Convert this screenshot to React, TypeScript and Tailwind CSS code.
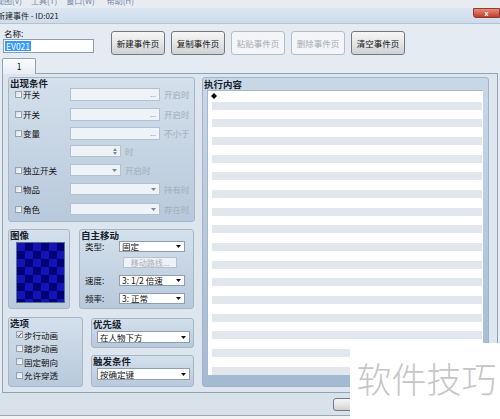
import React from 'react';

function Check({ checked }: { checked?: boolean }) {
  return (
    <span className="flex h-[7px] w-[7px] shrink-0 items-center justify-center border border-[#95a3b2] bg-linear-to-br from-[#d6dde6] to-[#fbfcfd]">
      {checked && (
        <svg width="6" height="6" viewBox="0 0 6 6">
          <path d="M0.6 3.3 L2.2 5 L5.4 0.6" stroke="#1a1a1a" strokeWidth="0.9" fill="none" />
        </svg>
      )}
    </span>
  );
}

function Arrow({ color }: { color: string }) {
  return (
    <svg width="5" height="3" viewBox="0 0 5 3" className="shrink-0">
      <path d="M0 0 L5 0 L2.5 3 Z" fill={color} />
    </svg>
  );
}

function Field({ className, kind }: { className: string; kind: 'dots' | 'arrow' | 'spin' }) {
  return (
    <div className={`flex shrink-0 items-center justify-end border border-[#b2c0cf] bg-[#eef3f8] pr-[3px] ${className}`}>
      {kind === 'dots' && <span className="text-[7px] leading-[7px] text-[#7f8b98]">...</span>}
      {kind === 'arrow' && <Arrow color="#7d8894" />}
      {kind === 'spin' && (
        <div className="flex flex-col gap-[1px]">
          <svg width="4" height="3" viewBox="0 0 4 3"><path d="M0 3 L4 3 L2 0 Z" fill="#7d8894" /></svg>
          <svg width="4" height="3" viewBox="0 0 4 3"><path d="M0 0 L4 0 L2 3 Z" fill="#7d8894" /></svg>
        </div>
      )}
    </div>
  );
}

function Combo({ text, className }: { text: string; className: string }) {
  return (
    <div className={`flex shrink-0 items-center justify-between border border-[#8d9eb1] bg-white pl-[2px] pr-[3px] text-[8.5px] text-[#111] ${className}`}>
      <span className="whitespace-pre leading-none">{text}</span>
      <Arrow color="#111" />
    </div>
  );
}

function Group({ title, className, children }: { title: string; className: string; children?: React.ReactNode }) {
  return (
    <div className={`shrink-0 rounded-[3px] border border-[#a4b6ca] bg-linear-to-b from-[#d4e0ec] to-[#b8c9db] ${className}`}>
      <div className="h-[10px] whitespace-nowrap pl-[1px] text-[9.5px] font-bold leading-[10px] text-[#17212c]">{title}</div>
      {children}
    </div>
  );
}

function CondRow({ label, check = true, field, fieldW, suffix, className }: { label?: string; check?: boolean; field: 'dots' | 'arrow' | 'spin'; fieldW: string; suffix: string; className: string }) {
  return (
    <div className={`flex items-center ${className}`}>
      <div className="flex w-[61px] shrink-0 items-center gap-[1px] pl-[6px]">
        {check && <Check />}
        {label && <span className="text-[8.5px] leading-none text-[#111]">{label}</span>}
      </div>
      <Field className={`h-full ${fieldW}`} kind={field} />
      <span className="ml-[4px] whitespace-nowrap text-[8.5px] leading-none text-[#a3acb6]">{suffix}</span>
    </div>
  );
}

function Btn({ text, disabled, className }: { text?: string; disabled?: boolean; className: string }) {
  return disabled ? (
    <div className={`flex shrink-0 items-center justify-center rounded-[3px] border border-[#b4bcc5] bg-[#f3f5f8] text-[8.5px] text-[#a4abb3] ${className}`}>{text}</div>
  ) : (
    <div className={`flex shrink-0 items-center justify-center rounded-[3px] border border-[#74797f] bg-linear-to-b from-[#f6f6f6] via-[#e6e6e6] to-[#cfd1d4] text-[8.5px] text-[#111] ${className}`}>{text}</div>
  );
}

export default function App() {
  return (
    <div className="relative flex h-[419px] w-[500px] flex-col overflow-hidden bg-[#e4ebf3] font-['Noto_Sans_CJK_SC','Noto_Sans',sans-serif]">
      {/* menu strip */}
      <div className="h-[8px] shrink-0 overflow-hidden bg-[#e8ecf1]">
        <div className="-mt-[3px] flex whitespace-nowrap text-[8px] leading-[8px] text-[#6f86a8]">
          <span className="-ml-[4px]">视图(V)</span>
          <span className="ml-[9px]">工具(T)</span>
          <span className="ml-[9px]">窗口(W)</span>
          <span className="ml-[12px]">帮助(H)</span>
        </div>
      </div>
      {/* title bar */}
      <div className="flex h-[16px] shrink-0 justify-between border-b border-[#b4c3d4] bg-linear-to-b from-[#dbe6f2] to-[#cedcec]">
        <span className="-ml-[3px] self-center whitespace-nowrap text-[8px] leading-none text-[#1c1c1c]">新建事件 - ID:021</span>
        <div className="flex h-[10px] w-[27px] items-center justify-center rounded-bl-[3px] border border-[#8f3b30] bg-linear-to-b from-[#e58c7c] to-[#c23a28] text-[7px] font-bold leading-none text-white">x</div>
      </div>
      {/* name + buttons */}
      <div className="flex h-[34px] shrink-0 pl-[3px] pt-[4px]">
        <div className="flex w-[91px] shrink-0 flex-col">
          <span className="h-[11px] pl-[1px] text-[8.5px] leading-[11px] text-[#111]">名称:</span>
          <div className="flex h-[14px] items-center border border-[#8b9cb0] bg-white pl-[1px]">
            <span className="bg-[#3399ff] px-[1px] text-[8.5px] leading-[10px] text-white">EV021</span>
          </div>
        </div>
        <div className="ml-[17px] mt-[3px] flex gap-[6px]">
          <Btn text="新建事件页" className="h-[24px] w-[54px]" />
          <Btn text="复制事件页" className="h-[24px] w-[54px]" />
          <Btn text="粘贴事件页" disabled className="h-[24px] w-[54px]" />
          <Btn text="删除事件页" disabled className="h-[24px] w-[54px]" />
          <Btn text="清空事件页" className="h-[24px] w-[54px]" />
        </div>
      </div>
      {/* tab header */}
      <div className="flex h-[15px] shrink-0 pl-[2px]">
        <div className="relative z-10 flex h-[16px] w-[34px] items-center justify-center rounded-t-[2px] border border-b-0 border-[#8fa3b8] bg-linear-to-b from-[#fbfcfe] to-[#e7edf4] text-[8.5px] leading-none text-[#111]">1</div>
      </div>
      {/* tab body */}
      <div className="mx-[2px] flex h-[320px] shrink-0 gap-[7px] border border-[#8fa3b8] bg-[#dde5ee] pl-[5px] pt-[3px]">
        {/* left column */}
        <div className="flex w-[187px] shrink-0 flex-col">
          <Group title="出现条件" className="h-[145px] w-[187px]">
            <CondRow label="开关" field="dots" fieldW="w-[90px]" suffix="开启时" className="h-[13px]" />
            <CondRow label="开关" field="dots" fieldW="w-[90px]" suffix="开启时" className="mt-[7px] h-[13px]" />
            <CondRow label="变量" field="dots" fieldW="w-[90px]" suffix="不小于" className="mt-[6px] h-[13px]" />
            <CondRow check={false} field="spin" fieldW="w-[51px]" suffix="时" className="mt-[5px] h-[12px]" />
            <CondRow label="独立开关" field="arrow" fieldW="w-[51px]" suffix="开启时" className="mt-[7px] h-[12px]" />
            <CondRow label="物品" field="arrow" fieldW="w-[90px]" suffix="持有时" className="mt-[7px] h-[12px]" />
            <CondRow label="角色" field="arrow" fieldW="w-[90px]" suffix="存在时" className="mt-[8px] h-[12px]" />
          </Group>
          <div className="mt-[7px] flex gap-[9px]">
            <Group title="图像" className="h-[80px] w-[62px]">
              <div className="ml-[7px] mt-[2px] h-[61px] w-[49px] border border-[#5a6f8a]">
                <svg width="47" height="59" viewBox="0 0 47 59" className="block">
                  <defs>
                    <pattern id="chk" width="16" height="16" patternUnits="userSpaceOnUse">
                      <rect width="16" height="16" fill="#00007a" />
                      <rect x="0" y="0" width="8" height="8" fill="#1414b4" />
                      <rect x="8" y="8" width="8" height="8" fill="#1414b4" />
                    </pattern>
                  </defs>
                  <rect width="47" height="59" fill="url(#chk)" />
                </svg>
              </div>
            </Group>
            <Group title="自主移动" className="h-[80px] w-[115px]">
              <div className="mt-[1px] flex h-[11px] items-center">
                <span className="w-[39px] shrink-0 pl-[5px] text-[8.5px] leading-none text-[#111]">类型:</span>
                <Combo text="固定" className="h-full w-[66px]" />
              </div>
              <div className="ml-[43px] mt-[5px] flex h-[11px] w-[54px] items-center justify-center border border-[#b8c2cd] bg-[#eef2f6] text-[8px] leading-none text-[#a6aeb7]">移动路线...</div>
              <div className="mt-[7px] flex h-[11px] items-center">
                <span className="w-[39px] shrink-0 pl-[5px] text-[8.5px] leading-none text-[#111]">速度:</span>
                <Combo text="3: 1/2 倍速" className="h-full w-[66px]" />
              </div>
              <div className="mt-[7px] flex h-[11px] items-center">
                <span className="w-[39px] shrink-0 pl-[5px] text-[8.5px] leading-none text-[#111]">频率:</span>
                <Combo text="3: 正常" className="h-full w-[66px]" />
              </div>
            </Group>
          </div>
          <div className="mt-[8px] flex gap-[8px]">
            <Group title="选项" className="h-[70px] w-[75px]">
              {[
                ['步行动画', true],
                ['踏步动画', false],
                ['固定朝向', false],
                ['允许穿透', false],
              ].map(([t, c]) => (
                <div key={t as string} className="flex h-[13.5px] items-center gap-[1px] pl-[7px]">
                  <Check checked={c as boolean} />
                  <span className="text-[8.5px] leading-none text-[#111]">{t as string}</span>
                </div>
              ))}
            </Group>
            <div className="flex w-[103px] shrink-0 flex-col">
              <Group title="优先级" className="mt-[1px] h-[30px] w-[103px]">
                <Combo text="在人物下方" className="ml-[5px] mt-[2px] h-[12px] w-[93px]" />
              </Group>
              <Group title="触发条件" className="mt-[7px] h-[32px] w-[103px]">
                <Combo text="按确定键" className="ml-[5px] mt-[2px] h-[12px] w-[93px]" />
              </Group>
            </div>
          </div>
        </div>
        {/* right group */}
        <div className="flex h-[310px] w-[287px] shrink-0 flex-col rounded-[3px] border border-[#9fb3c9] bg-linear-to-b from-[#c9d8e7] to-[#a3bad3]">
          <div className="h-[12px] shrink-0 pl-[1px] text-[9.5px] font-bold leading-[12px] text-[#17212c]">执行内容</div>
          <div className="ml-[4px] flex h-[285px] w-[276px] shrink-0 flex-col overflow-hidden border-l border-t border-[#aab8c6] bg-white">
            <div className="flex h-[10.67px] shrink-0 items-center pl-[3px]">
              <svg width="6" height="6" viewBox="0 0 6 6"><path d="M3 0 L6 3 L3 6 L0 3 Z" fill="#000" /></svg>
            </div>
            {Array.from({ length: 16 }).map((_, i) => (
              <React.Fragment key={i}>
                <div className="ml-[4px] mr-[1px] h-[8px] shrink-0 bg-[#e2e7ed]" />
                <div className="h-[9.67px] shrink-0" />
              </React.Fragment>
            ))}
          </div>
        </div>
      </div>
      {/* bottom buttons (mostly hidden under the watermark) */}
      <div className="flex h-[22px] shrink-0 justify-end gap-[5px] bg-[#d9e1ea] pr-[7px] pt-[5px]">
        <Btn className="h-[13px] w-[50px]" />
        <Btn className="h-[13px] w-[50px]" />
        <Btn className="h-[13px] w-[50px]" />
      </div>
      <div className="h-[4px] shrink-0 border-t border-[#9aa8b6] bg-[#f2f3f4]" />
      {/* watermark */}
      <div className="absolute bottom-0 right-0 flex h-[76px] w-[150px] items-center justify-center bg-white pb-[8px] pl-[3px]">
        <span className="whitespace-nowrap text-[35px] font-light leading-none tracking-[0px] text-[#c6c6c6]">软件技巧</span>
      </div>
    </div>
  );
}
